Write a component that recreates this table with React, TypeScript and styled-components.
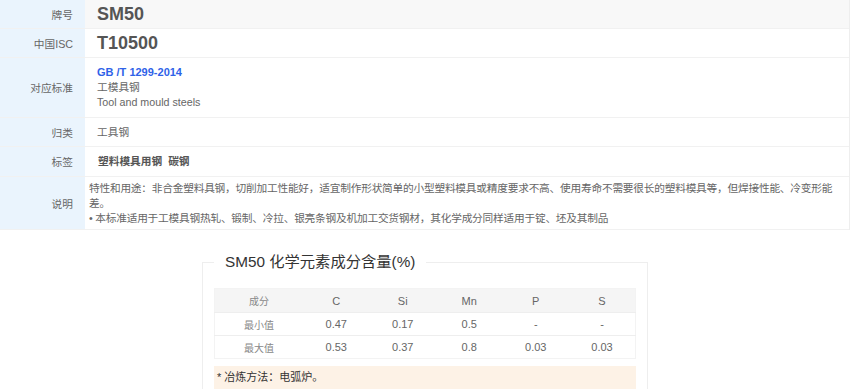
import React from 'react';
import styled, { createGlobalStyle } from 'styled-components';

const GlobalStyle = createGlobalStyle`
  body {
    margin: 0;
    background: #fff;
    font-family: "Liberation Sans", "Noto Sans CJK SC", sans-serif;
    color: #666;
  }
`;

const Page = styled.div`
  width: 860px;
  height: 389px;
  overflow: hidden;
`;

const InfoTable = styled.div`
  width: 850px;
  border-right: 1px solid #eee;
  box-sizing: border-box;
`;

const Row = styled.div<{ $h: number; $shade?: boolean }>`
  display: grid;
  grid-template-columns: 85px 1fr;
  min-height: ${(p) => p.$h}px;
  border-bottom: 1px solid #f1f1f1;
  background: ${(p) => (p.$shade ? '#f8f8f8' : '#fff')};
`;

const Label = styled.div`
  background: #eaf4fd;
  display: flex;
  align-items: center;
  justify-content: flex-end;
  padding-right: 12px;
  font-size: 10.7px;
  color: #666;
`;

const Value = styled.div<{ $tight?: boolean }>`
  display: flex;
  flex-direction: column;
  justify-content: center;
  padding: 3px ${(p) => (p.$tight ? '3px 3px 4px' : '12px')};
  font-size: 10.7px;
  line-height: 15px;
  letter-spacing: ${(p) => (p.$tight ? '-0.22px' : 'normal')};
  color: #666;
`;

const Grade = styled.span`
  font-size: 18px;
  font-weight: bold;
  color: #555;
`;

const StdLink = styled.a`
  font-weight: bold;
  color: #2f62e8;
  text-decoration: none;
  font-size: 11px;
`;

const Tags = styled.div`
  display: flex;
  gap: 6px;
  padding-left: 1px;
  font-weight: bold;
  color: #555;
`;

const Section = styled.fieldset`
  width: 446px;
  box-sizing: border-box;
  margin: 20px 0 0 202px;
  padding: 0 11px 0 11px;
  border: 1px solid #eee;
  min-width: 0;
`;

const Legend = styled.legend`
  padding: 0 11px;
  font-size: 15.3px;
  line-height: 24px;
  color: #333;
`;

const Chem = styled.table`
  width: 422px;
  margin-top: 14px;
  border-collapse: collapse;
  table-layout: fixed;
  font-size: 11px;
  color: #666;
  border: 1px solid #f3f3f3;
`;

const Th = styled.th<{ $wide?: boolean }>`
  width: ${(p) => (p.$wide ? '88px' : 'auto')};
  height: 23px;
  padding: 0;
  background: #f5f5f5;
  font-weight: normal;
  text-align: center;
  color: #666;
`;

const Td = styled.td<{ $muted?: boolean }>`
  height: 22px;
  padding: 0;
  text-align: center;
  border-top: 1px solid #eee;
  font-size: ${(p) => (p.$muted ? '10px' : '11px')};
  color: ${(p) => (p.$muted ? '#888' : '#666')};
`;

const HeadName = styled.span`
  font-size: 10px;
  color: #888;
`;

const Note = styled.div`
  margin-top: 7px;
  background: #fdf2e6;
  padding: 4px 3px;
  font-size: 11px;
  line-height: 15px;
  color: #333;
`;

const Tab = styled.div`
  width: 81px;
  height: 3px;
  margin: 1px auto 0;
  background: #1a9b7b;
`;

const cols = ['C', 'Si', 'Mn', 'P', 'S'];
const rows = [
  { name: '最小值', v: ['0.47', '0.17', '0.5', '-', '-'] },
  { name: '最大值', v: ['0.53', '0.37', '0.8', '0.03', '0.03'] },
];

export default function App() {
  return (
    <Page>
      <GlobalStyle />
      <InfoTable>
        <Row $h={28} $shade>
          <Label>牌号</Label>
          <Value>
            <Grade>SM50</Grade>
          </Value>
        </Row>
        <Row $h={28}>
          <Label>中国ISC</Label>
          <Value>
            <Grade>T10500</Grade>
          </Value>
        </Row>
        <Row $h={59}>
          <Label>对应标准</Label>
          <Value>
            <StdLink href="#">GB /T 1299-2014</StdLink>
            <span>工模具钢</span>
            <span>Tool and mould steels</span>
          </Value>
        </Row>
        <Row $h={28}>
          <Label>归类</Label>
          <Value>
            <span>工具钢</span>
          </Value>
        </Row>
        <Row $h={29}>
          <Label>标签</Label>
          <Value>
            <Tags>
              <span>塑料模具用钢</span>
              <span>碳钢</span>
            </Tags>
          </Value>
        </Row>
        <Row $h={52}>
          <Label>说明</Label>
          <Value $tight>
            <span>
              特性和用途：非合金塑料具钢，切削加工性能好，适宜制作形状简单的小型塑料模具或精度要求不高、使用寿命不需要很长的塑料模具等，但焊接性能、冷变形能差。
            </span>
            <span>• 本标准适用于工模具钢热轧、锻制、冷拉、银亮条钢及机加工交货钢材，其化学成分同样适用于锭、坯及其制品</span>
          </Value>
        </Row>
      </InfoTable>
      <Section>
        <Legend>SM50 化学元素成分含量(%)</Legend>
        <Chem>
          <thead>
            <tr>
              <Th $wide>
                <HeadName>成分</HeadName>
              </Th>
              {cols.map((c) => (
                <Th key={c}>{c}</Th>
              ))}
            </tr>
          </thead>
          <tbody>
            {rows.map((r) => (
              <tr key={r.name}>
                <Td $muted>{r.name}</Td>
                {r.v.map((v, i) => (
                  <Td key={i}>{v}</Td>
                ))}
              </tr>
            ))}
          </tbody>
        </Chem>
        <Note>* 冶炼方法：电弧炉。</Note>
        <Tab />
      </Section>
    </Page>
  );
}
